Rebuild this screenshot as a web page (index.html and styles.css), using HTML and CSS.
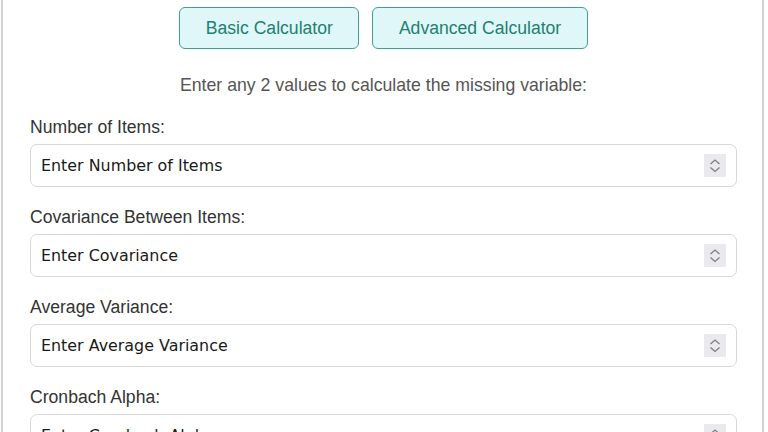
FILE: index.html
```html
<!DOCTYPE html>
<html lang="en">
<head>
<meta charset="utf-8">
<title>Cronbach Alpha Calculator</title>
<link rel="stylesheet" href="styles.css">
</head>
<body>
<div class="card">
  <div class="tabs">
    <button class="tab">Basic Calculator</button>
    <button class="tab">Advanced Calculator</button>
  </div>
  <p class="intro">Enter any 2 values to calculate the missing variable:</p>

  <div class="field">
    <label class="label">Number of Items:</label>
    <div class="box">
      <input class="input" type="text" placeholder="Enter Number of Items">
      <span class="spin"><svg viewBox="0 0 22 23" width="22" height="23"><path d="M6.5 10 L11 6 L15.5 10 M6.5 13.5 L11 17.5 L15.5 13.5" fill="none" stroke="#7d7d86" stroke-width="1.3"/></svg></span>
    </div>
  </div>

  <div class="field">
    <label class="label">Covariance Between Items:</label>
    <div class="box">
      <input class="input" type="text" placeholder="Enter Covariance">
      <span class="spin"><svg viewBox="0 0 22 23" width="22" height="23"><path d="M6.5 10 L11 6 L15.5 10 M6.5 13.5 L11 17.5 L15.5 13.5" fill="none" stroke="#7d7d86" stroke-width="1.3"/></svg></span>
    </div>
  </div>

  <div class="field">
    <label class="label">Average Variance:</label>
    <div class="box">
      <input class="input" type="text" placeholder="Enter Average Variance">
      <span class="spin"><svg viewBox="0 0 22 23" width="22" height="23"><path d="M6.5 10 L11 6 L15.5 10 M6.5 13.5 L11 17.5 L15.5 13.5" fill="none" stroke="#7d7d86" stroke-width="1.3"/></svg></span>
    </div>
  </div>

  <div class="field">
    <label class="label">Cronbach Alpha:</label>
    <div class="box">
      <input class="input" type="text" placeholder="Enter Cronbach Alpha">
      <span class="spin"><svg viewBox="0 0 22 23" width="22" height="23"><path d="M6.5 10 L11 6 L15.5 10 M6.5 13.5 L11 17.5 L15.5 13.5" fill="none" stroke="#7d7d86" stroke-width="1.3"/></svg></span>
    </div>
  </div>
</div>
</body>
</html>
```
FILE: styles.css
```css
html, body {
  margin: 0;
  padding: 0;
  background: #ffffff;
  overflow: hidden;
}

body {
  font-family: "Liberation Sans", Arial, sans-serif;
  color: #333333;
}

.card {
  margin: 0 4px 0 1px;
  border-left: 2px solid #d2d2d2;
  border-right: 2px solid #d2d2d2;
  padding: 7px 25px 40px 27px;
  min-height: 500px;
}

.tabs {
  display: flex;
  justify-content: center;
  gap: 13px;
}

.tab {
  height: 42px;
  padding: 0 25.5px;
  border: 1px solid #3f9f92;
  border-radius: 6px;
  background: #e0f7f9;
  color: #237f70;
  font-family: "Liberation Sans", Arial, sans-serif;
  font-size: 17.6px;
  cursor: pointer;
}

.intro {
  margin: 26px 0 21px;
  text-align: center;
  font-size: 17.7px;
  line-height: 21px;
  color: #555555;
}

.field {
  margin-bottom: 20px;
}

.label {
  display: block;
  font-size: 17.6px;
  line-height: 21px;
  color: #333333;
  margin-bottom: 6px;
}

.box {
  display: flex;
  align-items: center;
  height: 43px;
  box-sizing: border-box;
  border: 1px solid #d8d8d8;
  border-radius: 7px;
  background: #ffffff;
  padding: 0 10px;
}

.input {
  flex: 1;
  min-width: 0;
  border: none;
  outline: none;
  padding: 0;
  background: transparent;
  font-family: "DejaVu Sans", Verdana, sans-serif;
  font-size: 15.9px;
  color: #1a1a1a;
}

.input::placeholder {
  color: #1a1a1a;
  opacity: 1;
}

.spin {
  display: flex;
  width: 22px;
  height: 23px;
  background: #e9e9ee;
}
```
